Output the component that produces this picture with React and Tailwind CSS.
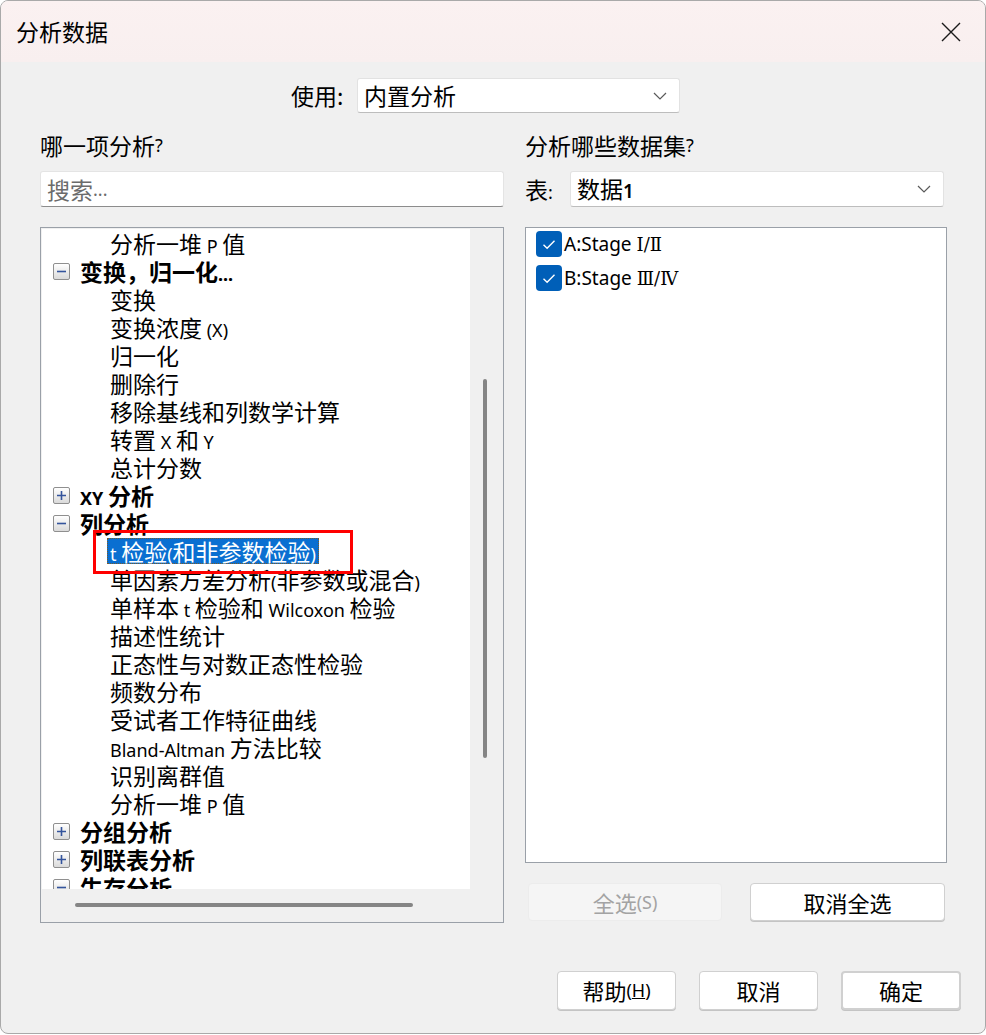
import React from "react";

const rows = [
  { t: "分析一堆 P 值" },
  { t: "变换，归一化...", g: "-" },
  { t: "变换" },
  { t: "变换浓度 (X)" },
  { t: "归一化" },
  { t: "删除行" },
  { t: "移除基线和列数学计算" },
  { t: "转置 X 和 Y" },
  { t: "总计分数" },
  { t: "XY 分析", g: "+" },
  { t: "列分析", g: "-" },
  { t: "t 检验(和非参数检验)", sel: true },
  { t: "单因素方差分析(非参数或混合)" },
  { t: "单样本 t 检验和 Wilcoxon 检验" },
  { t: "描述性统计" },
  { t: "正态性与对数正态性检验" },
  { t: "频数分布" },
  { t: "受试者工作特征曲线" },
  { t: "Bland-Altman 方法比较" },
  { t: "识别离群值" },
  { t: "分析一堆 P 值" },
  { t: "分组分析", g: "+" },
  { t: "列联表分析", g: "+" },
  { t: "生存分析", g: "-" },
];

// latin runs render smaller, like the windows font fallback does
const Mixed = ({ text }) => (
  <span className="whitespace-pre">
    {text.split(/([A-Za-z0-9().\-:/ ]+)/).map((p, i) =>
      /[A-Za-z0-9().]/.test(p) ? (
        <span key={i} className="font-['Noto_Sans',sans-serif] text-[18px]">
          {p}
        </span>
      ) : (
        <React.Fragment key={i}>{p}</React.Fragment>
      )
    )}
  </span>
);

const Toggle = ({ sign }) => (
  <span className="flex h-[17px] w-[17px] shrink-0 items-center justify-center rounded-[2px] border border-[#8f8f8f] bg-linear-to-b from-white to-[#dadada]">
    <svg width="11" height="11" viewBox="0 0 11 11">
      <path d={sign === "+" ? "M1 5.5h9M5.5 1v9" : "M1 5.5h9"} stroke="#34549c" strokeWidth="1.6" />
    </svg>
  </span>
);

const Chevron = () => (
  <svg width="14" height="8" viewBox="0 0 14 8" className="shrink-0">
    <path d="M1 1l6 6 6-6" fill="none" stroke="#5a5a5a" strokeWidth="1.2" />
  </svg>
);

const Check = () => (
  <span className="flex h-[26px] w-[26px] shrink-0 items-center justify-center rounded-[4px] bg-[#005fb8]">
    <svg width="14" height="11" viewBox="0 0 14 11">
      <path d="M1.5 5.8l3.6 3.4L12.5 1.8" fill="none" stroke="white" strokeWidth="1.4" />
    </svg>
  </span>
);

const Btn = ({ children, className = "" }) => (
  <button
    type="button"
    className={`flex items-center justify-center rounded-[4px] border border-[#d0d0d0] bg-white text-[22px] text-black shadow-[0_1px_0_#c4c4c4] ${className}`}
  >
    {children}
  </button>
);

const TreeRow = ({ row }) => {
  if (row.g) {
    return (
      <div className="flex h-[28px] items-center pl-[11px] font-bold">
        <Toggle sign={row.g} />
        <span className="ml-[10px] leading-none">
          <Mixed text={row.t} />
        </span>
      </div>
    );
  }
  if (row.sel) {
    return (
      <div className="relative flex h-[28px] items-center pl-[65px]">
        <span className="flex h-[26px] items-center border border-dotted border-[#7a5c2a] bg-[#0a6fd1] px-[2px] leading-none text-white">
          <Mixed text={row.t} />
        </span>
        <div className="absolute left-[51px] top-[-7px] h-[44px] w-[260px] border-[3px] border-[#ff0000]" />
      </div>
    );
  }
  return (
    <div className="flex h-[28px] items-center pl-[68px] leading-none">
      <Mixed text={row.t} />
    </div>
  );
};

const Label = ({ name, nums }) => (
  <span className="whitespace-pre font-['Noto_Sans',sans-serif] text-[19px] leading-none">
    {name}
    <span className="font-['DejaVu_Serif',serif] text-[18px]">{nums}</span>
  </span>
);

const App = () => (
  <div className="h-[1035px] w-[986px] bg-white font-['Noto_Sans_CJK_SC',sans-serif] text-[23px] text-black">
    <div className="flex h-[1034px] flex-col overflow-hidden rounded-[8px] border border-[#a9a9a9] bg-[#f0f0f0]">
      {/* title bar */}
      <div className="flex h-[61px] shrink-0 items-center justify-between bg-linear-to-b from-[#fbf1f1] to-[#f8efef] pl-[15px] pr-[24px]">
        <span className="leading-none">分析数据</span>
        <svg width="20" height="20" viewBox="0 0 20 20">
          <path d="M1 1l18 18M19 1L1 19" stroke="#1a1a1a" strokeWidth="1.4" />
        </svg>
      </div>

      {/* use row */}
      <div className="mt-[16px] flex h-[35px] items-center pl-[290px]">
        <span className="w-[66px] leading-none">使用:</span>
        <div className="flex h-[35px] w-[323px] items-center justify-between rounded-[3px] border border-[#e2e2e2] border-b-[#bdbdbd] bg-white pl-[6px] pr-[12px]">
          <span className="leading-none">内置分析</span>
          <Chevron />
        </div>
      </div>

      <div className="mt-[16px] flex gap-[21px] pl-[39px]">
        {/* left column */}
        <div className="flex w-[464px] flex-col">
          <div className="flex h-[32px] items-center leading-none">
            哪一项分析<span className="font-['Noto_Sans',sans-serif] text-[18px]">?</span>
          </div>
          <div className="mt-[10px] flex h-[36px] items-center rounded-[3px] border border-[#e4e4e4] border-b-[#8c8c8c] bg-white pl-[6px] leading-none text-[#6b6b6b]">
            搜索<span className="font-['Noto_Sans',sans-serif] text-[18px]">...</span>
          </div>
          <div className="mt-[20px] flex h-[696px] flex-col border border-[#9aa0a8] bg-[#f0f0f0] p-[1px]">
            <div className="flex h-[660px]">
              <div className="relative w-[428px] overflow-hidden bg-white">
                {rows.map((r, i) => (
                  <TreeRow key={i} row={r} />
                ))}
              </div>
              <div className="flex-1 pl-[13px] pt-[150px]">
                <div className="h-[379px] w-[4px] rounded-full bg-[#858585]" />
              </div>
            </div>
            <div className="flex flex-1 items-center pl-[33px]">
              <div className="h-[4px] w-[338px] rounded-full bg-[#858585]" />
            </div>
          </div>
        </div>

        {/* right column */}
        <div className="flex w-[422px] flex-col">
          <div className="flex h-[32px] items-center leading-none">
            分析哪些数据集<span className="font-['Noto_Sans',sans-serif] text-[18px]">?</span>
          </div>
          <div className="mt-[10px] flex h-[36px] items-center">
            <span className="w-[45px] leading-none">
              表<span className="font-['Noto_Sans',sans-serif] text-[18px]">:</span>
            </span>
            <div className="flex h-[36px] w-[374px] items-center justify-between rounded-[3px] border border-[#e2e2e2] border-b-[#bdbdbd] bg-white pl-[6px] pr-[12px]">
              <span className="leading-none">
                数据<span className="font-['Noto_Sans',sans-serif] text-[19px] font-semibold">1</span>
              </span>
              <Chevron />
            </div>
          </div>
          <div className="mt-[20px] flex h-[636px] flex-col gap-[8px] border border-[#9aa0a8] bg-white pl-[10px] pt-[3px]">
            <div className="flex items-center gap-[2px]">
              <Check />
              <Label name="A:Stage " nums="Ⅰ/Ⅱ" />
            </div>
            <div className="flex items-center gap-[2px]">
              <Check />
              <Label name="B:Stage " nums="Ⅲ/Ⅳ" />
            </div>
          </div>
          <div className="mt-[20px] flex justify-between pl-[3px] pr-[2px]">
            <div className="flex h-[38px] w-[194px] items-center justify-center rounded-[4px] border border-[#ececec] bg-[#f5f5f5] text-[22px] text-[#a3a3a3]">
              全选<span className="font-['Noto_Sans',sans-serif] text-[18px]">(S)</span>
            </div>
            <Btn className="h-[38px] w-[195px]">取消全选</Btn>
          </div>
        </div>
      </div>

      {/* footer */}
      <div className="mt-[48px] flex justify-end gap-[23px] pr-[24px]">
        <Btn className="h-[39px] w-[119px]">
          帮助
          <span className="font-['Noto_Sans',sans-serif] text-[18px]">
            (<span className="underline">H</span>)
          </span>
        </Btn>
        <Btn className="h-[39px] w-[119px]">取消</Btn>
        <Btn className="h-[39px] w-[120px] border-2 border-[#0067c0]">确定</Btn>
      </div>
    </div>
  </div>
);

export default App;
